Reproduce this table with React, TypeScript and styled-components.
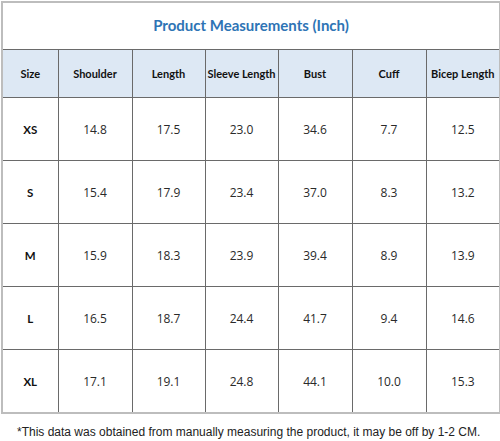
import React from "react";
import styled, { createGlobalStyle } from "styled-components";

const Global = createGlobalStyle`
  html, body { margin: 0; padding: 0; background: #ffffff; }
  body { width: 500px; height: 441px; overflow: hidden; }
`;

const Page = styled.div`
  display: flex;
  flex-direction: column;
  padding: 1px 0 0 1px;
`;

const Table = styled.table`
  border-collapse: collapse;
  table-layout: fixed;
  width: 498px;
  border: 2px solid #bdbdbd;
`;

const TitleCell = styled.th`
  height: 44px;
  padding: 0 0 2px;
  text-align: center;
  font-family: "Lato", "Open Sans", sans-serif;
  font-weight: 700;
  font-size: 15px;
  color: #2e74b5;
  border-bottom: 1px solid #6a6a6a;
`;

const HeadCell = styled.th`
  height: 47px;
  padding: 0;
  background: #dde8f4;
  border: 1px solid #6a6a6a;
  font-family: "Lato", "Open Sans", sans-serif;
  font-weight: 700;
  font-size: 11px;
  color: #111;
  white-space: nowrap;
  text-align: center;
`;

const Cell = styled.td<{ $label?: boolean }>`
  height: 62px;
  padding: 0;
  border: 1px solid #6a6a6a;
  text-align: center;
  font-family: ${(p) => (p.$label ? `"Lato", "Open Sans", sans-serif` : `"Open Sans", "Noto Sans", sans-serif`)};
  font-weight: ${(p) => (p.$label ? 700 : 400)};
  font-size: ${(p) => (p.$label ? "11.5px" : "12px")};
  color: ${(p) => (p.$label ? "#111" : "#2a2a2a")};
`;

const Note = styled.p`
  margin: 11px 0 0 16px;
  font-family: "Liberation Sans", Arial, sans-serif;
  font-size: 12px;
  color: #222;
  white-space: nowrap;
`;

const widths = [56, 74, 73, 73, 74, 74, 74];
const headers = ["Size", "Shoulder", "Length", "Sleeve Length", "Bust", "Cuff", "Bicep Length"];
const rows: string[][] = [
  ["XS", "14.8", "17.5", "23.0", "34.6", "7.7", "12.5"],
  ["S", "15.4", "17.9", "23.4", "37.0", "8.3", "13.2"],
  ["M", "15.9", "18.3", "23.9", "39.4", "8.9", "13.9"],
  ["L", "16.5", "18.7", "24.4", "41.7", "9.4", "14.6"],
  ["XL", "17.1", "19.1", "24.8", "44.1", "10.0", "15.3"],
];

export default function App() {
  return (
    <Page>
      <Global />
      <Table>
        <colgroup>
          {widths.map((w, i) => (
            <col key={i} style={{ width: w }} />
          ))}
        </colgroup>
        <thead>
          <tr>
            <TitleCell colSpan={7}>Product Measurements (Inch)</TitleCell>
          </tr>
          <tr>
            {headers.map((h) => (
              <HeadCell key={h}>{h}</HeadCell>
            ))}
          </tr>
        </thead>
        <tbody>
          {rows.map((r) => (
            <tr key={r[0]}>
              {r.map((v, i) => (
                <Cell key={i} $label={i === 0}>
                  {v}
                </Cell>
              ))}
            </tr>
          ))}
        </tbody>
      </Table>
      <Note>*This data was obtained from manually measuring the product, it may be off by 1-2 CM.</Note>
    </Page>
  );
}
